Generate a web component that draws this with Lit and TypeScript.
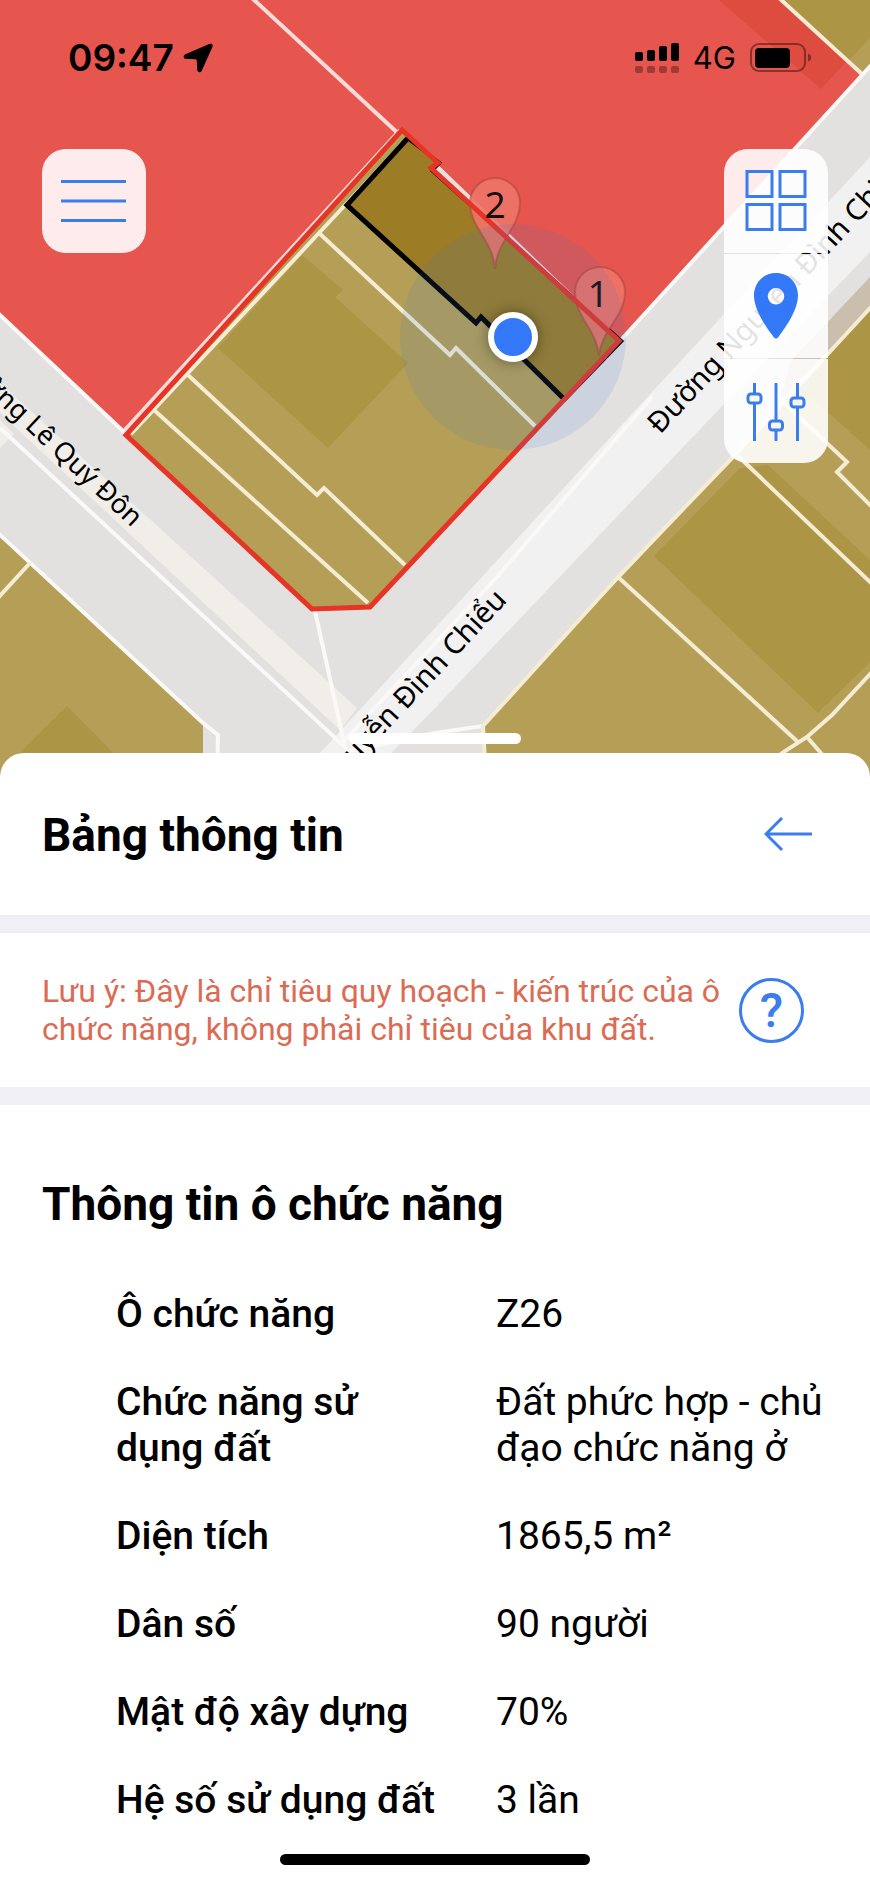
import { customElement, property } from "lit/decorators.js";
import { html, css, svg, LitElement } from "lit";

interface InfoRow {
  label: string;
  value: string;
}

@customElement("status-bar")
export class StatusBar extends LitElement {
  @property()
  time: string = "";

  @property()
  network: string = "";

  static styles = [
    css`
      * {
        box-sizing: border-box;
      }

      :host {
        align-items: center;
        color: #000000;
        display: flex;
        font-family: Inter, "Liberation Sans", sans-serif;
        justify-content: space-between;
      }

      .group {
        align-items: center;
        display: flex;
      }

      .time {
        font-size: 37px;
        font-weight: 600;
        line-height: 48px;
        margin-right: 9px;
      }

      .network {
        font-size: 31px;
        font-weight: 400;
        line-height: 48px;
        margin: 0 14px;
      }

      svg {
        display: block;
      }
    `,
  ];

  render() {
    return html`
      <div class="group">
        <span class="time">${this.time}</span>
        <svg width="30" height="30" viewBox="0 0 30 30" aria-hidden="true">
          <path
            d="M26.2 1.1 2.400 11.200C-.2 12.500.2 15.700 3 15.800L12 16.200C13.400 16.300 13.800 16.700 13.800 18L14.200 26.600C14.400 30 17.800 30 19 27.200L29.400 4C30.400 1.300 28.800 0 26.200 1.100Z"
          />
        </svg>
      </div>
      <div class="group">
        <svg width="44" height="32" viewBox="0 0 44 32" aria-hidden="true">
          <rect x="0" y="10" width="8" height="9" rx="2" />
          <rect x="12" y="8" width="8" height="11" rx="2" />
          <rect x="24" y="4" width="8" height="15" rx="2" />
          <rect x="36" y="1" width="8" height="18" rx="2" />
          <g opacity="0.3">
            <rect x="0" y="24" width="8" height="7" rx="2" />
            <rect x="12" y="24" width="8" height="7" rx="2" />
            <rect x="24" y="24" width="8" height="7" rx="2" />
            <rect x="36" y="24" width="8" height="7" rx="2" />
          </g>
        </svg>
        <span class="network">${this.network}</span>
        <svg width="62" height="30" viewBox="0 0 62 30" aria-hidden="true">
          <rect x="1" y="1" width="54" height="27" rx="8" fill="none" stroke="#000" stroke-width="2" opacity="0.4" />
          <rect x="5" y="5" width="35" height="20" rx="4" />
          <path d="M58 10.5c2 .4 3.200 2 3.200 4s-1.200 3.600-3.200 4z" opacity="0.4" />
        </svg>
      </div>
    `;
  }
}

@customElement("land-map")
export class LandMap extends LitElement {
  static styles = [
    css`
      :host {
        display: block;
      }

      svg {
        display: block;
        height: 100%;
        width: 100%;
      }

      .ground {
        fill: #e2e1e0;
      }

      .red {
        fill: #e6564e;
      }

      .red-dark {
        fill: #de4c40;
      }

      .ochre {
        fill: #b59f56;
      }

      .ochre-dark {
        fill: #ad9546;
      }

      .cream {
        fill: #f1eee9;
      }

      .road {
        fill: #f1f1f1;
      }

      .taupe {
        fill: #cabfac;
      }

      .line {
        fill: none;
        stroke: #fbf9f7;
        stroke-width: 4;
      }

      .pink {
        stroke: #fbdcd8;
      }

      .parcel {
        stroke: #f5ecd4;
      }

      .plot {
        fill: #9c7d26;
      }

      .plot-edge {
        fill: none;
        stroke: #000000;
        stroke-width: 5;
      }

      .block-edge {
        fill: none;
        stroke: #e63427;
        stroke-width: 5;
      }

      .pin {
        fill: #ee7468;
        fill-opacity: 0.9;
        stroke: #a8403a;
        stroke-opacity: 0.5;
        stroke-width: 2;
      }

      .pin-label {
        fill: #161010;
        font-family: "Noto Sans", sans-serif;
        font-size: 37px;
        text-anchor: middle;
      }

      .street {
        fill: #000000;
        font-family: "Noto Sans", sans-serif;
        font-size: 29px;
      }

      .small {
        font-size: 27px;
      }

      .end {
        text-anchor: end;
      }

      .accuracy {
        fill: #3370d6;
        opacity: 0.12;
      }

      .dot {
        fill: #3378f6;
        filter: drop-shadow(0 0 7px #00000066);
        stroke: #ffffff;
        stroke-width: 6;
      }
    `,
  ];

  render() {
    return html`
      <svg viewBox="0 0 870 780" preserveAspectRatio="xMidYMid slice">
        <rect class="ground" width="870" height="780" />
        ${this._roads()} ${this._parcels()} ${this._block()} ${this._labels()}
        <circle class="accuracy" cx="513" cy="337" r="113" />
        <circle class="dot" cx="513" cy="337" r="22" />
      </svg>
    `;
  }

  private _roads() {
    return svg`
      <path class="cream" d="M0 383 143 513 357 708 340 730 133 537 0 413Z" />
      <path class="cream" d="M0 420 14 434 0 448Z" />
      <path class="road" d="M320 753 435 628 665 378 870 157V252L725 403 435 708 365 780H295Z" />
      <path class="taupe" d="M790 362 870 277V308L780 400Z" />
      <path class="line" d="M652 397 497 577 345 740" />
      <path class="line" d="M0 428 345 747 315 611" />
      <path class="line" d="M345 752 435 733 483 726" />
    `;
  }

  private _parcels() {
    return svg`
      <path class="red" d="M0 0H780L862 76 621 341 402 130 124 432 0 315Z" />
      <path class="red-dark" d="M719 0 821 89 847 61 780 0Z" />
      <path class="ochre" d="M780 0H870V67L862 76Z" />
      <path class="ochre-dark" d="M780 0H870V38L849 60Z" />
      <path class="line pink" d="M252 -2 402 137" />
      <path class="line parcel" d="M778 -3 863 75" />
      <path class="line" d="M874 62 620 341" />
      <path class="line pink" d="M400 130 122 433" />
      <path class="line" d="M-2 313 124 432" />

      <path class="ochre" d="M0 535 203 723V780H0Z" />
      <path class="ochre-dark" d="M67 706-8 780H140Z" />
      <path class="line" d="M-2 533 203 723 218 735 217 780" />
      <path class="line parcel" d="M30 563-2 598" />

      <path class="ochre" d="M482 725 732 459 870 308V780H486Z" />
      <path class="ochre-dark" d="M740 468 654 556 818 713 870 662V560L768 465Z" />
      <path class="ochre-dark" d="M780 405 870 308V450L812 398Z" />
      <path class="line parcel" d="M486 780 483 726 618 577 732 458 872 306" />
      <path class="line parcel" d="M738 456 872 584" />
      <path class="line parcel" d="M782 401 847 462 837 472 872 507" />
      <path class="line parcel" d="M618 577 798 742" />
      <path class="line parcel" d="M750 780 782 753 807 737 832 715 872 672M807 737 840 775" />
    `;
  }

  private _block() {
    return svg`
      <path class="ochre" d="M402 129 437 163 431 168 619 341 370 607 312 609 126 435Z" />
      <path class="ochre-dark" d="M302 255 343 290 335 297 408 363 328 448 218 348Z" />
      <path class="line parcel" d="M404 142 319 233 131 434" />
      <path class="line parcel" d="M319 233 450 355 456 348 535 426" />
      <path class="line parcel" d="M188 375 317 495 324 488 405 565" />
      <path class="line parcel" d="M154 410 368 603" />
      <path class="plot" d="M408 140 347 205 476 323 481 317 563 398 619 341 431 168 437 163Z" />
      <path class="plot-edge" d="M408 138 347 205 476 323 481 317 563 398" />
      <path d="M408 139 440 163 432 171 622 341 564 401" fill="none" stroke="#000" stroke-width="3" />
      <path class="pin" d="M495 269C493 240 470 228 470 203A25 25 0 0 1 520 203C520 228 497 240 495 269Z" />
      <path class="pin" d="M599 356C597 330 575 317 575 292A25 25 0 0 1 625 292C625 317 601 330 599 356Z" />
      <path class="block-edge" d="M402 130 438 163 431 168 619 341 370 607 312 609 126 435Z" />
      <text class="pin-label" x="495" y="218">2</text>
      <text class="pin-label" x="598" y="307">1</text>
    `;
  }

  private _labels() {
    return svg`
      <text class="street" transform="translate(660 435) rotate(-47)">Đường Nguyễn Đình Chiểu</text>
      <text class="street end" transform="translate(508 601) rotate(-47)">Đường Nguyễn Đình Chiểu</text>
      <text class="street small end" transform="translate(132 528) rotate(43)">Đường Lê Quý Đôn</text>
    `;
  }
}

@customElement("app-root")
export class AppRoot extends LitElement {
  @property({ attribute: false })
  rows: InfoRow[] = [
    { label: "Ô chức năng", value: "Z26" },
    { label: "Chức năng sử dụng đất", value: "Đất phức hợp - chủ đạo chức năng ở" },
    { label: "Diện tích", value: "1865,5 m²" },
    { label: "Dân số", value: "90 người" },
    { label: "Mật độ xây dựng", value: "70%" },
    { label: "Hệ số sử dụng đất", value: "3 lần" },
  ];

  static styles = [
    css`
      * {
        box-sizing: border-box;
      }

      :host {
        background-color: #ffffff;
        color: #000000;
        display: block;
        font-family: Roboto, "Noto Sans", sans-serif;
      }

      h1,
      h2,
      p {
        margin: 0;
      }

      button {
        align-items: center;
        background: none;
        border: none;
        color: #3b7ded;
        cursor: pointer;
        display: flex;
        font-family: inherit;
        justify-content: center;
        padding: 0;
      }

      svg {
        display: block;
      }

      .map {
        display: grid;
        height: 780px;
      }

      .map-canvas,
      .map-overlay {
        grid-area: 1 / 1;
        min-height: 0;
        min-width: 0;
      }

      .map-overlay {
        display: flex;
        flex-direction: column;
        padding: 34px 42px 36px;
        z-index: 1;
      }

      .status {
        padding: 0 16px 0 26px;
      }

      .controls {
        align-items: flex-start;
        display: flex;
        justify-content: space-between;
        margin-top: 67px;
      }

      .tools {
        border-radius: 24px;
        display: flex;
        flex-direction: column;
        gap: 1px;
        overflow: hidden;
      }

      .map-button {
        background-color: #ffffffe3;
        height: 104px;
        width: 104px;
      }

      .handle {
        align-self: center;
        background-color: #ffffff;
        border-radius: 6px;
        height: 11px;
        margin-top: auto;
        width: 172px;
      }

      .panel {
        background-color: #ffffff;
        border-radius: 24px 24px 0 0;
        margin-top: -27px;
        padding-bottom: 18px;
        position: relative;
        z-index: 2;
      }

      .panel-header {
        align-items: center;
        border-bottom: 18px solid #f0eff5;
        display: flex;
        justify-content: space-between;
        padding: 55px 56px 53px 42px;
      }

      .title {
        font-size: 46px;
        font-weight: 700;
        line-height: 54px;
      }

      .note {
        align-items: center;
        border-bottom: 18px solid #f0eff5;
        display: flex;
        gap: 8px;
        justify-content: space-between;
        padding: 39px 66px 39px 42px;
      }

      .note-text {
        color: #dc6b54;
        font-size: 32px;
        line-height: 38px;
      }

      .help {
        border: 3px solid #3b7ded;
        border-radius: 50%;
        flex: none;
        font-size: 48px;
        font-weight: 500;
        height: 65px;
        width: 65px;
      }

      .info {
        padding: 72px 42px 0;
      }

      .info-table {
        border-collapse: collapse;
        font-size: 39px;
        line-height: 46px;
        margin-top: 60px;
        width: 100%;
      }

      .info-table th,
      .info-table td {
        padding: 0 0 42px;
        text-align: left;
        vertical-align: top;
      }

      .info-table th {
        font-weight: 500;
        padding-left: 74px;
        padding-right: 48px;
        width: 454px;
      }

      .info-table td {
        font-weight: 400;
      }

      .home-indicator {
        background-color: #000000;
        border-radius: 6px;
        height: 11px;
        margin: -11px auto 0;
        width: 310px;
      }
    `,
  ];

  render() {
    return html`
      <main>
        <section class="map">
          <land-map class="map-canvas"></land-map>
          <div class="map-overlay">
            <status-bar class="status" time="09:47" network="4G"></status-bar>
            <div class="controls">
              <div class="tools">
                <button class="map-button" aria-label="Menu">${this._menuIcon()}</button>
              </div>
              <div class="tools">
                <button class="map-button" aria-label="Lớp bản đồ">${this._gridIcon()}</button>
                <button class="map-button" aria-label="Vị trí">${this._pinIcon()}</button>
                <button class="map-button" aria-label="Bộ lọc">${this._slidersIcon()}</button>
              </div>
            </div>
            <div class="handle"></div>
          </div>
        </section>
        <section class="panel">
          <header class="panel-header">
            <h1 class="title">Bảng thông tin</h1>
            <button aria-label="Quay lại">${this._backIcon()}</button>
          </header>
          <div class="note">
            <p class="note-text">
              Lưu ý: Đây là chỉ tiêu quy hoạch - kiến trúc của ô chức năng, không phải chỉ tiêu của khu đất.
            </p>
            <button class="help" aria-label="Trợ giúp">?</button>
          </div>
          <div class="info">
            <h2 class="title">Thông tin ô chức năng</h2>
            <table class="info-table">
              <tbody>
                ${this.rows.map(
                  (row) => html`
                    <tr>
                      <th scope="row">${row.label}</th>
                      <td>${row.value}</td>
                    </tr>
                  `
                )}
              </tbody>
            </table>
          </div>
          <div class="home-indicator"></div>
        </section>
      </main>
    `;
  }

  private _menuIcon() {
    return html`
      <svg width="66" height="44" viewBox="0 0 66 44" fill="none" stroke="currentColor" stroke-width="3">
        <path d="M0 2.500h65M0 22h65M0 41.500h65" />
      </svg>
    `;
  }

  private _gridIcon() {
    return html`
      <svg width="62" height="62" viewBox="0 0 62 62" fill="none" stroke="currentColor" stroke-width="3">
        <path d="M2 1.500h25v25h-25zM35 1.500h25v25h-25zM2 34.500h25v25h-25zM35 34.500h25v25h-25z" />
      </svg>
    `;
  }

  private _pinIcon() {
    return html`
      <svg width="44" height="66" viewBox="0 0 44 66" fill="#3378f6">
        <path
          fill-rule="evenodd"
          d="M22 0C9.500 0 0 9.500 0 22.500 0 35 9 50 20 64.500Q22 66.500 24 64.500C35 50 44 35 44 22.500 44 9.500 34.500 0 22 0ZM22 15a8.300 8.300 0 1 1 0 16.600 8.300 8.300 0 0 1 0-16.600Z"
        />
      </svg>
    `;
  }

  private _slidersIcon() {
    return html`
      <svg width="60" height="60" viewBox="0 0 60 60" fill="none" stroke="currentColor" stroke-width="3">
        <path d="M8.500 2v10M8.500 23v37M30 2v37M30 50v10M51.500 2v14M51.500 27v33" />
        <rect x="2" y="13" width="13" height="9" rx="3" />
        <rect x="23.500" y="40" width="13" height="9" rx="3" />
        <rect x="45" y="17" width="13" height="9" rx="3" />
      </svg>
    `;
  }

  private _backIcon() {
    return html`
      <svg width="50" height="36" viewBox="0 0 50 36" fill="none" stroke="currentColor" stroke-width="3">
        <path d="M18 1 2 17l16 16M2 17h46" />
      </svg>
    `;
  }
}

declare global {
  interface HTMLElementTagNameMap {
    "status-bar": StatusBar;
    "land-map": LandMap;
    "app-root": AppRoot;
  }
}
